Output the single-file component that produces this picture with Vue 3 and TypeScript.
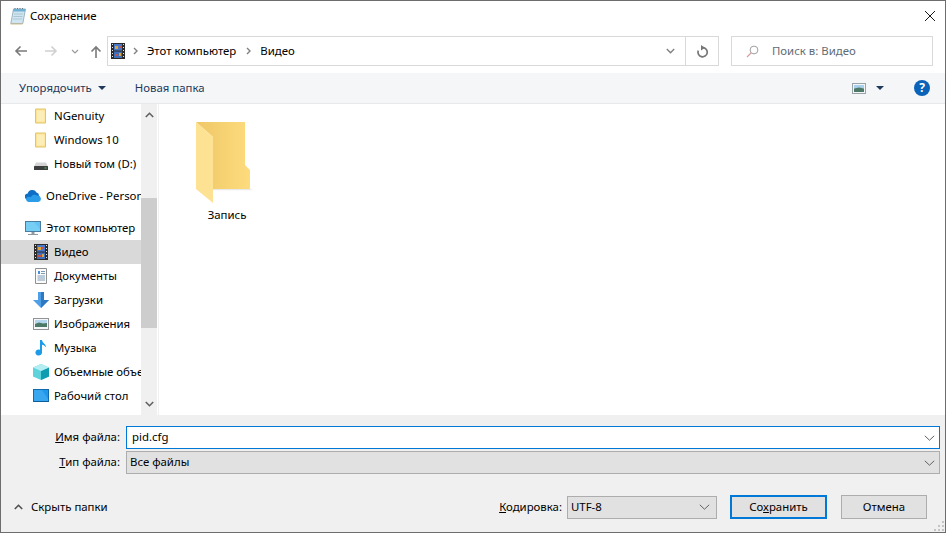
<template>
  <div class="dialog">
    <div class="titlebar">
      <svg class="title-icon" width="16" height="17" viewBox="0 0 16 17">
        <path d="M3.500 1h12L12.800 15.500H.8z" fill="#cfe6f2" stroke="#8fa3ad" stroke-width=".8" />
        <path d="M3.500 1h12l-.5 2.500H3z" fill="#6fb0d2" />
        <path d="M5 1V0M7.500 1V0M10 1V0M12.500 1V0" stroke="#66757d" />
        <path d="M4 6h9M3.500 8.500h9M3 11h9" stroke="#a5bdca" stroke-width=".8" />
        <path d="M.8 15.500L.5 16.500h11.800l.5-1" fill="#d4c08a" />
      </svg>
      <span class="title-text">Сохранение</span>
      <svg class="close-icon" width="12" height="12" viewBox="0 0 12 12">
        <path d="M1 1l10 10M11 1L1 11" stroke="#1a1a1a" stroke-width="1" fill="none" />
      </svg>
    </div>

    <div class="navbar">
      <div class="nav-buttons">
        <svg width="14" height="12" viewBox="0 0 14 12"><path d="M13 6H2M6.500 1.500L2 6l4.500 4.500" class="arrow on" /></svg>
        <svg class="fwd" width="14" height="12" viewBox="0 0 14 12"><path d="M1 6h11M7.500 1.500L12 6l-4.500 4.500" class="arrow off" /></svg>
        <svg class="hist" width="8" height="5" viewBox="0 0 8 5"><path d="M1 1l3 3 3-3" class="arrow hist-line" /></svg>
        <svg class="up" width="12" height="13" viewBox="0 0 12 13"><path d="M6 13V2M1.500 6.500L6 2l4.500 4.500" class="arrow on" /></svg>
      </div>
      <div class="breadcrumb">
        <svg class="film" width="14" height="16" viewBox="0 0 14 16">
          <rect width="14" height="16" fill="#2b2b2b" />
          <rect x="3" y="1" width="8" height="6.500" fill="#4a78c8" />
          <rect x="3" y="8.500" width="8" height="6.500" fill="#3f6fb8" />
          <path d="M4 3h3v3H4zM8 10h2v3H8z" fill="#d9a441" />
          <path d="M4 11h3v2H4zM8 3h2v2H8z" fill="#c8504a" />
          <path d="M1 1.500h1M1 4.500h1M1 7.500h1M1 10.500h1M1 13.500h1M12 1.500h1M12 4.500h1M12 7.500h1M12 10.500h1M12 13.500h1" stroke="#e8e8e8" />
        </svg>
        <svg class="crumb-sep" width="5" height="8" viewBox="0 0 5 8"><path d="M1 1l3 3-3 3" class="chev" /></svg>
        <span class="crumb">Этот компьютер</span>
        <svg class="crumb-sep" width="5" height="8" viewBox="0 0 5 8"><path d="M1 1l3 3-3 3" class="chev" /></svg>
        <span class="crumb">Видео</span>
        <svg class="crumb-drop" width="9" height="6" viewBox="0 0 9 6"><path d="M.8 1l3.700 3.700L8.200 1" class="chev" /></svg>
        <div class="crumb-refresh">
          <svg width="13" height="13" viewBox="0 0 13 13">
            <path d="M7.200 2.600a4.600 4.600 0 1 1-4.900 3" fill="none" stroke="#777" stroke-width="1.700" />
            <path d="M5 0l4 2.700L5 5.400z" fill="#777" />
          </svg>
        </div>
      </div>
      <div class="search">
        <svg width="13" height="13" viewBox="0 0 13 13">
          <circle cx="8" cy="5" r="3.900" fill="none" stroke="#a0a0a0" />
          <path d="M5 8l-4 4" stroke="#d39a9a" stroke-width="1.100" />
        </svg>
        <span>Поиск в: Видео</span>
      </div>
    </div>

    <div class="toolbar">
      <span class="tool">Упорядочить</span>
      <i class="caret organize-caret"></i>
      <span class="tool new-folder">Новая папка</span>
      <svg class="view-icon" width="14" height="11" viewBox="0 0 14 11">
        <rect x=".5" y=".5" width="13" height="10" fill="#f4f6f7" stroke="#9aa3a8" />
        <rect x="2" y="2" width="10" height="3.500" fill="#a9d0ea" />
        <path d="M2 5.500l5-1 5 1V9H2z" fill="#4d7a68" />
      </svg>
      <i class="caret view-caret"></i>
      <div class="help">?</div>
    </div>

    <div class="main">
      <div class="tree">
        <div class="tree-list">
          <div
            v-for="row in rows"
            :key="row.icon + row.label"
            class="tree-row"
            :class="{ selected: row.selected, root: row.root, spaced: row.spaced }"
          >
            <svg class="tree-icon" width="16" height="16" viewBox="0 0 16 16">
              <template v-if="row.icon === 'folder'">
                <path d="M2.500 1h10v14h-10z" fill="#fde28f" stroke="#e2c46c" />
                <path d="M4 2.500h7.500v11H4z" fill="#fdedb8" />
              </template>
              <template v-else-if="row.icon === 'drive'">
                <path d="M3 6.500h10l2 4H1z" fill="#d4d4d4" />
                <rect x="1" y="10" width="14" height="4" rx=".5" fill="#3d3d3d" />
                <rect x="11.500" y="11.500" width="2" height="1" fill="#4fd04f" />
              </template>
              <template v-else-if="row.icon === 'cloud'">
                <path d="M3 11.500a3 3 0 0 1-.3-6A4.800 4.800 0 0 1 11.500 4.500a3.400 3.400 0 0 1 2.500 3.700l-7 4.300z" fill="#0f6fc6" />
                <path d="M3.500 14a2.800 2.800 0 0 1-.8-5.300L6 9a4 4 0 0 1 6-1.500 3.300 3.300 0 0 1 1.200 6.500z" fill="#2a9ce8" />
              </template>
              <template v-else-if="row.icon === 'pc'">
                <rect x=".5" y="1.500" width="15" height="10" fill="#63c3f2" stroke="#4a7da0" />
                <path d="M1 11h14V9L9 2H1z" fill="#86d5f7" opacity=".6" />
                <path d="M6.500 12h3v2h-3zM3 14h10v1H3z" fill="#8e9aa3" />
              </template>
              <template v-else-if="row.icon === 'film'">
                <rect x="1" width="14" height="16" fill="#2b2b2b" />
                <rect x="4" y="1" width="8" height="6.500" fill="#4a78c8" />
                <rect x="4" y="8.500" width="8" height="6.500" fill="#3f6fb8" />
                <path d="M5 3h3v3H5zM9 10h2v3H9z" fill="#d9a441" />
                <path d="M5 11h3v2H5zM9 3h2v2H9z" fill="#c8504a" />
                <path d="M2 1.500h1M2 4.500h1M2 7.500h1M2 10.500h1M2 13.500h1M13 1.500h1M13 4.500h1M13 7.500h1M13 10.500h1M13 13.500h1" stroke="#e8e8e8" />
              </template>
              <template v-else-if="row.icon === 'doc'">
                <path d="M2.500 .5h11v15h-11z" fill="#fbfbfb" stroke="#8f8f8f" />
                <path d="M5 3h2v3H5z" fill="#4a90d9" />
                <path d="M8 3.500h4M8 5.500h4M4.500 8h7.500M4.500 10h7.500M4.500 12h7.500" stroke="#7d9ab5" />
              </template>
              <template v-else-if="row.icon === 'down'">
                <path d="M5 0h6v8h5l-8 8-8-8h5z" fill="#4f9fe6" />
                <path d="M8 0h3v8h5l-8 8z" fill="#2f78c4" />
              </template>
              <template v-else-if="row.icon === 'image'">
                <rect x=".5" y="2.500" width="15" height="11" fill="#f4f6f7" stroke="#8f9498" />
                <rect x="2" y="4" width="12" height="4" fill="#b4d6ee" />
                <path d="M2 8l4-1.500 4 1 4-.5v4H2z" fill="#4d7a68" />
              </template>
              <template v-else-if="row.icon === 'music'">
                <path d="M7 0h2c.3 3 4 3.500 4 7.500-1-1.700-2.500-2.500-4-2.800V12.500a3.300 3 0 1 1-2-2.700z" fill="#1d9ae8" />
              </template>
              <template v-else-if="row.icon === 'cube'">
                <path d="M8 0l8 3.500v9L8 16l-8-3.500v-9z" fill="#5ed3dc" />
                <path d="M8 7l8-3.500v9L8 16z" fill="#0f9bb0" />
                <path d="M8 0l8 3.500L8 7 0 3.500z" fill="#b4eef2" />
              </template>
              <template v-else-if="row.icon === 'desktop'">
                <rect x=".5" y="1.500" width="15" height="12" fill="#1f97ea" stroke="#1069ad" />
                <path d="M1 13h14v-2L9 2H1z" fill="#4ab3f2" opacity=".6" />
                <path d="M1 13h14v1H1z" fill="#0c5d9c" />
              </template>
              <template v-else>
                <path d="M8 5l6 8H2z" fill="#4ab3f2" />
              </template>
            </svg>
            <span v-if="row.label" class="tree-label">{{ row.label }}</span>
          </div>
        </div>
        <div class="scrollbar">
          <svg width="9" height="6" viewBox="0 0 9 6"><path d="M.8 5l3.700-3.700L8.200 5" class="scroll-arrow" /></svg>
          <div class="scroll-track"><div class="scroll-thumb"></div></div>
          <svg width="9" height="6" viewBox="0 0 9 6"><path d="M.8 1l3.700 3.700L8.200 1" class="scroll-arrow" /></svg>
        </div>
      </div>

      <div class="files">
        <div class="file-item">
          <svg width="58" height="84" viewBox="0 0 58 84">
            <defs>
              <linearGradient id="back" x1="0" x2="1" y1="0" y2="0">
                <stop offset="0" stop-color="#efc766" />
                <stop offset="1" stop-color="#fddc7e" />
              </linearGradient>
            </defs>
            <path d="M18 68h37l3 .5-3 .8H18z" fill="#e9e9e9" />
            <path d="M1 1h49v43l5 5v19H18V16z" fill="url(#back)" />
            <path d="M1 1l17 15v66L1 68z" fill="#fee293" />
          </svg>
          <span>Запись</span>
        </div>
      </div>
    </div>

    <div class="footer">
      <div class="form-row">
        <label class="form-label"><u>И</u>мя файла:</label>
        <div class="field name-field">
          <span>pid.cfg</span>
          <svg width="11" height="6" viewBox="0 0 11 6"><path d="M.8.800l4.700 4.400L10.200.800" class="combo-arrow" /></svg>
        </div>
      </div>
      <div class="form-row type-row">
        <label class="form-label"><u>Т</u>ип файла:</label>
        <div class="field type-field">
          <span>Все файлы</span>
          <svg width="11" height="6" viewBox="0 0 11 6"><path d="M.8.800l4.700 4.400L10.200.800" class="combo-arrow" /></svg>
        </div>
      </div>
      <div class="actions">
        <svg class="hide-arrow" width="9" height="6" viewBox="0 0 9 6"><path d="M.8 5l3.700-3.700L8.200 5" class="hide-line" /></svg>
        <span class="hide-text">Скрыть папки</span>
        <label class="enc-label"><u>К</u>одировка:</label>
        <div class="enc-select">
          <span>UTF-8</span>
          <svg width="11" height="6" viewBox="0 0 11 6"><path d="M.8.800l4.700 4.400L10.200.800" class="combo-arrow" /></svg>
        </div>
        <button class="btn primary">Со<u>х</u>ранить</button>
        <button class="btn cancel">Отмена</button>
      </div>
      <svg class="grip" width="11" height="11" viewBox="0 0 11 11">
        <path d="M8 0h2v2H8zM4 4h2v2H4zM8 4h2v2H8zM0 8h2v2H0zM4 8h2v2H4zM8 8h2v2H8z" fill="#c4c4c4" />
      </svg>
    </div>
  </div>
</template>

<script setup lang="ts">
interface TreeRow {
  label: string
  icon: string
  root?: boolean
  selected?: boolean
  spaced?: boolean
}

const rows: TreeRow[] = [
  { label: 'NGenuity', icon: 'folder' },
  { label: 'Windows 10', icon: 'folder' },
  { label: 'Новый том (D:)', icon: 'drive' },
  { label: 'OneDrive - Personal', icon: 'cloud', root: true, spaced: true },
  { label: 'Этот компьютер', icon: 'pc', root: true, spaced: true },
  { label: 'Видео', icon: 'film', selected: true },
  { label: 'Документы', icon: 'doc' },
  { label: 'Загрузки', icon: 'down' },
  { label: 'Изображения', icon: 'image' },
  { label: 'Музыка', icon: 'music' },
  { label: 'Объемные объекты', icon: 'cube' },
  { label: 'Рабочий стол', icon: 'desktop' },
  // only the top of this icon shows above the panel edge
  { label: '', icon: 'more' }
]
</script>

<style>
html,
body {
  margin: 0;
  background: #fff;
}
</style>

<style scoped>
.dialog {
  width: 946px;
  height: 533px;
  box-sizing: border-box;
  border: 1px solid #6d6d6d;
  display: flex;
  flex-direction: column;
  position: relative;
  overflow: hidden;
  background: #fff;
  color: #000;
  font-family: "Noto Sans", "Liberation Sans", sans-serif;
  font-size: 11.4px;
}

/* Noto sits a pixel lower than the system font, lift the labels */
.title-text,
.crumb,
.search span,
.tool,
.tree-label,
.field span,
.form-label,
.hide-text,
.enc-label,
.enc-select span {
  padding-bottom: 2px;
}

.titlebar {
  height: 30px;
  flex-shrink: 0;
  display: flex;
  align-items: center;
  padding: 0 9px 0 9px;
}

.title-icon {
  margin-right: 4px;
}

.close-icon {
  margin-left: auto;
  margin-right: 0;
}

.navbar {
  height: 42px;
  flex-shrink: 0;
  display: flex;
  align-items: flex-start;
  padding-top: 5px;
  box-sizing: border-box;
}

.nav-buttons {
  width: 106px;
  height: 30px;
  flex-shrink: 0;
  display: flex;
  align-items: center;
  padding-left: 13px;
  box-sizing: border-box;
}

.fwd {
  margin-left: 16px;
}

.hist {
  margin-left: 13px;
}

.up {
  margin-left: 11px;
}

.arrow {
  fill: none;
  stroke-width: 1.6;
}

.arrow.on {
  stroke: #7a7a7a;
}

.arrow.off {
  stroke: #d0d0d0;
}

.arrow.hist-line {
  stroke: #9a9a9a;
  stroke-width: 1.2;
}

.chev {
  fill: none;
  stroke: #808080;
  stroke-width: 1.4;
}

.breadcrumb {
  width: 612px;
  height: 30px;
  box-sizing: border-box;
  border: 1px solid #d9d9d9;
  display: flex;
  align-items: center;
  padding-left: 3px;
}

.crumb-sep {
  margin: 0 9px 0 8px;
}

.crumb {
  white-space: nowrap;
  margin-right: 2px;
}

.crumb-drop {
  margin-left: auto;
  margin-right: 10px;
}

.crumb-refresh {
  width: 32px;
  height: 28px;
  border-left: 1px solid #d9d9d9;
  display: flex;
  align-items: center;
  justify-content: center;
}

.search {
  width: 202px;
  height: 30px;
  box-sizing: border-box;
  margin-left: 12px;
  border: 1px solid #d9d9d9;
  display: flex;
  align-items: center;
  gap: 13px;
  padding-left: 14px;
  color: #5f6b75;
}

.toolbar {
  height: 31px;
  flex-shrink: 0;
  box-sizing: border-box;
  background: #f5f6f7;
  border-bottom: 1px solid #e8e9ea;
  display: flex;
  align-items: center;
  padding-left: 18px;
  color: #1e395b;
}

.caret {
  width: 0;
  height: 0;
  border-left: 4px solid transparent;
  border-right: 4px solid transparent;
  border-top: 4px solid #1e395b;
}

.organize-caret {
  margin-left: 6px;
}

.new-folder {
  margin-left: 29px;
}

.view-icon {
  margin-left: auto;
}

.view-caret {
  margin-left: 10px;
}

.help {
  width: 16px;
  height: 16px;
  margin: 0 15px 0 30px;
  border-radius: 50%;
  background: #0a63b8;
  color: #fff;
  font-weight: 700;
  font-size: 12px;
  line-height: 16px;
  text-align: center;
}

.main {
  height: 311px;
  flex-shrink: 0;
  display: flex;
}

.tree {
  width: 157px;
  flex-shrink: 0;
  display: flex;
  border-right: 1px solid #f0f0f0;
  box-sizing: content-box;
}

.tree-list {
  width: 140px;
  flex-shrink: 0;
  overflow: hidden;
}

.tree-row {
  height: 24px;
  display: flex;
  align-items: center;
  padding-left: 32px;
  gap: 5px;
  white-space: nowrap;
}

.tree-row.root {
  padding-left: 24px;
  gap: 5px;
}

.tree-row.spaced {
  margin-top: 8px;
}

.tree-row.selected {
  background: #d9d9d9;
}

.tree-icon {
  flex-shrink: 0;
}

.scrollbar {
  width: 16px;
  margin-left: 0;
  flex-shrink: 0;
  background: #f0f0f0;
  display: flex;
  flex-direction: column;
  align-items: center;
  padding: 8px 0 8px;
  box-sizing: border-box;
}

.scroll-arrow {
  fill: none;
  stroke: #606060;
  stroke-width: 1.600;
}

.scroll-track {
  flex: 1;
  align-self: stretch;
  padding-top: 80px;
}

.scroll-thumb {
  height: 130px;
  background: #cdcdcd;
}

.files {
  flex: 1;
  padding: 17px 0 0 36px;
}

.file-item {
  width: 64px;
  display: flex;
  flex-direction: column;
  align-items: center;
}

.file-item svg {
  align-self: flex-start;
}

.file-item span {
  margin-top: 2px;
}

.footer {
  flex: 1;
  background: #f0f0f0;
  padding-top: 11px;
  position: relative;
}

.form-row {
  display: flex;
  align-items: center;
  height: 23px;
}

.type-row {
  margin-top: 2px;
}

.form-label {
  width: 119px;
  text-align: right;
  margin-right: 6px;
  flex-shrink: 0;
}

.field {
  width: 814px;
  height: 23px;
  box-sizing: border-box;
  display: flex;
  align-items: center;
  justify-content: space-between;
  padding-right: 4px;
}

.name-field {
  background: #fff;
  border: 1px solid #0078d7;
  padding-left: 5px;
}

.type-field {
  background: #e1e1e1;
  border: 1px solid #adadad;
  padding-left: 3px;
}

.combo-arrow {
  fill: none;
  stroke: #606060;
  stroke-width: 1;
}

.actions {
  display: flex;
  align-items: center;
  height: 24px;
  margin-top: 21px;
  padding-left: 13px;
}

.hide-line {
  fill: none;
  stroke: #505050;
  stroke-width: 1.600;
}

.hide-text {
  margin-left: 8px;
}

.enc-label {
  margin-left: auto;
}

.enc-select {
  width: 150px;
  height: 23px;
  box-sizing: border-box;
  margin-left: 5px;
  background: #e1e1e1;
  border: 1px solid #adadad;
  display: flex;
  align-items: center;
  justify-content: space-between;
  padding: 0 6px 0 3px;
}

.btn {
  height: 24px;
  box-sizing: border-box;
  padding: 0 0 2px;
  background: #e1e1e1;
  font-family: inherit;
  font-size: 11.4px;
  color: #000;
}

.primary {
  width: 97px;
  margin-left: 13px;
  border: 2px solid #0078d7;
}

.cancel {
  width: 86px;
  margin-left: 14px;
  margin-right: 18px;
  border: 1px solid #adadad;
}

.grip {
  position: absolute;
  right: 0;
  bottom: 0;
}
</style>
